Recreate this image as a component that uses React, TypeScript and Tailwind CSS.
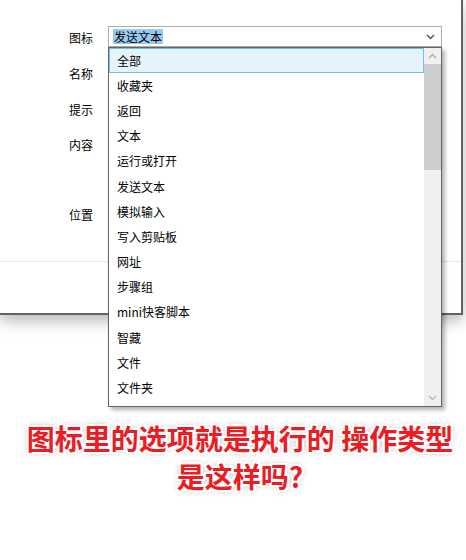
import React from 'react';

const options = [
  '全部',
  '收藏夹',
  '返回',
  '文本',
  '运行或打开',
  '发送文本',
  '模拟输入',
  '写入剪贴板',
  '网址',
  '步骤组',
  'mini快客脚本',
  '智藏',
  '文件',
  '文件夹',
];

const Chevron: React.FC<{ up?: boolean; color: string; width?: number }> = ({ up, color, width = 1.2 }) => (
  <svg width="9" height="6" viewBox="0 0 9 6" className="block">
    <polyline
      points={up ? '1,5 4.5,1.5 8,5' : '1,1 4.5,4.5 8,1'}
      fill="none"
      stroke={color}
      strokeWidth={width}
    />
  </svg>
);

const App: React.FC = () => {
  return (
    <div className="relative w-[466px] h-[560px] bg-white overflow-hidden font-['Noto_Sans_CJK_SC','Noto_Sans',sans-serif] text-[12px] text-black">
      {/* Dialog window */}
      <div className="w-[463px] h-[315px] bg-white border-r-2 border-b-2 border-[#626262] shadow-[0_6px_14px_rgba(0,0,0,0.28)] flex flex-col">
        <div className="flex items-center mt-[26px] h-[21px]">
          <span className="pl-[69px] w-[108px] leading-[20px] pt-[2px]">图标</span>
          <div className="w-[334px] h-[21px] border border-[#acacac] flex items-center pl-[4px] pr-[6px]">
            <span className="bg-[#99c9ef] leading-[15px] px-[1px]">发送文本</span>
            <span className="ml-auto">
              <Chevron color="#555" width={1.5} />
            </span>
          </div>
        </div>
        <span className="pl-[69px] mt-[17px] leading-[20px]">名称</span>
        <span className="pl-[69px] mt-[16px] leading-[20px]">提示</span>
        <span className="pl-[69px] mt-[15px] leading-[20px]">内容</span>
        <span className="pl-[69px] mt-[50px] leading-[20px]">位置</span>
        <div className="mt-[36px] border-t border-[#e6e6e6]" />
      </div>

      {/* Dropdown popup */}
      <div className="absolute left-[108px] top-[47px] w-[334px] h-[360px] bg-white border border-[#646464] shadow-[3px_3px_4px_rgba(0,0,0,0.3)] flex">
        <div className="flex-1 overflow-hidden">
          {options.map((o, i) => (
            <div
              key={o}
              className={
                i === 0
                  ? 'h-[25.2px] flex items-center pl-[7px] bg-[#e5f3fb] border border-[#70c0e7]'
                  : 'h-[25.2px] flex items-center pl-[8px]'
              }
            >
              {o}
            </div>
          ))}
        </div>
        <div className="w-[17px] bg-[#f0f0f0] flex flex-col">
          <div className="h-[16px] flex items-center justify-center">
            <Chevron up color="#a3a3a3" />
          </div>
          <div className="h-[106px] bg-[#cdcdcd]" />
          <div className="flex-1" />
          <div className="h-[17px] flex items-center justify-center">
            <Chevron color="#b0b0b0" />
          </div>
        </div>
      </div>

      {/* Caption */}
      <div className="mt-[104px] pl-[14px] text-center text-[28px] leading-[38px] font-bold text-[#ec1c24] [text-shadow:2px_0_0_#fff,-2px_0_0_#fff,0_2px_0_#fff,0_-2px_0_#fff,2px_2px_0_#fff,-2px_-2px_0_#fff,2px_-2px_0_#fff,-2px_2px_0_#fff,0_0_6px_rgba(0,0,0,0.45)]">
        <div>图标里的选项就是执行的 操作类型</div>
        <div>是这样吗?</div>
      </div>
    </div>
  );
};

export default App;
